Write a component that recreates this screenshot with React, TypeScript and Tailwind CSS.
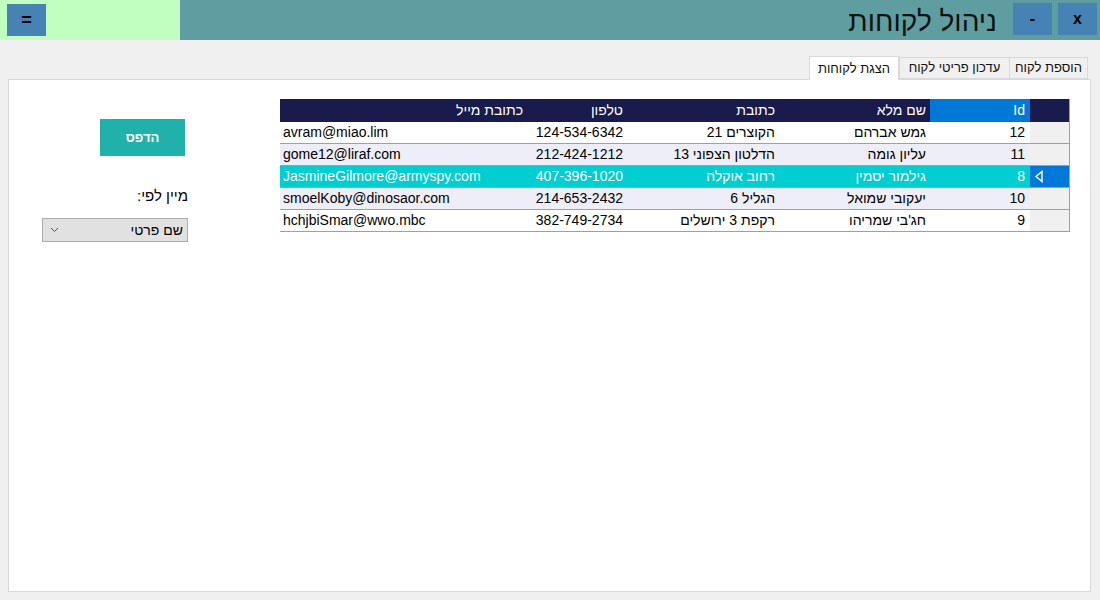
import React from "react";

const rows = [
  { id: "12", name: "גמש אברהם", addr: "הקוצרים 21", phone: "124-534-6342", email: "avram@miao.lim" },
  { id: "11", name: "עליון גומה", addr: "הדלטון הצפוני 13", phone: "212-424-1212", email: "gome12@liraf.com" },
  { id: "8", name: "גילמור יסמין", addr: "רחוב אוקלה", phone: "407-396-1020", email: "JasmineGilmore@armyspy.com", sel: true },
  { id: "10", name: "יעקובי שמואל", addr: "הגליל 6", phone: "214-653-2432", email: "smoelKoby@dinosaor.com" },
  { id: "9", name: "חג'בי שמריהו", addr: "רקפת 3 ירושלים", phone: "382-749-2734", email: "hchjbiSmar@wwo.mbc" },
];

const font = { fontFamily: '"Liberation Sans", "DejaVu Sans", Arial, sans-serif' };

export default function App() {
  return (
    <div className="w-[1100px] h-[600px] bg-[#f0f0f0] overflow-hidden text-black" style={font}>
      {/* top bar */}
      <div className="flex h-10">
        <div className="w-[180px] bg-[#c0ffc0] pl-[7px] pt-1">
          <div className="w-[39px] h-[32px] bg-[#4682b4] flex items-center justify-center font-bold text-[18px] leading-none">=</div>
        </div>
        <div className="flex-1 bg-[#5f9ea0] flex items-start justify-end pt-[3px] pr-[3px]">
          <div dir="rtl" className="text-[28px] leading-none mt-[5px] mr-[16px] text-[#111]">ניהול לקוחות</div>
          <div className="w-[39px] h-[32px] bg-[#4682b4] flex items-center justify-center font-bold text-[16px]">-</div>
          <div className="w-[39px] h-[32px] bg-[#4682b4] flex items-center justify-center font-bold text-[16px] ml-[6px]">x</div>
        </div>
      </div>

      {/* tabs */}
      <div dir="rtl" className="flex items-end h-[39px] pr-[12px] pt-[15px]">
        <div className="h-[22px] w-[79px] border border-[#d9d9d9] bg-[#f0f0f0] flex items-center justify-center text-[13px] text-[#111]">הוספת לקוח</div>
        <div className="h-[22px] w-[110px] border border-r-0 border-[#d9d9d9] bg-[#f0f0f0] flex items-center justify-center text-[13px] text-[#111]">עדכון פריטי לקוח</div>
        <div className="h-[24px] w-[90px] border border-b-0 border-[#d9d9d9] bg-white flex items-center justify-center text-[13px] text-[#111] -mb-px relative z-10">הצגת לקוחות</div>
      </div>

      {/* panel */}
      <div className="ml-[8px] w-[1083px] h-[513px] bg-white border border-[#d9d9d9] flex">
        {/* left controls */}
        <div className="w-[271px] flex flex-col items-start">
          <div className="ml-[91px] mt-[39px] w-[85px] h-[37px] bg-[#20b2aa] text-white font-bold text-[13px] flex items-center justify-center" dir="rtl">הדפס</div>
          <div dir="rtl" className="ml-[33px] w-[146px] mt-[32px] text-[15px] leading-none">מיין לפי:</div>
          <div dir="rtl" className="ml-[33px] mt-[15px] w-[146px] h-[24px] bg-[#e1e1e1] border border-[#adadad] flex items-center justify-between px-[4px] text-[14px]">
            <span>שם פרטי</span>
            <svg width="9" height="6" viewBox="0 0 9 6" className="ml-[3px]"><path d="M1 1 L4.5 4.5 L8 1" stroke="#555" strokeWidth="1" fill="none" /></svg>
          </div>
        </div>

        {/* grid */}
        <div className="mt-[19px] w-[790px] border-r border-[#a0a0a0] self-start" dir="rtl">
          <div className="flex h-[23px] bg-[#181b4b] text-white text-[14px]">
            <div className="w-[39px]" />
            <div className="w-[100px] bg-[#0078d7] flex items-center pr-[5px]">Id</div>
            <div className="w-[151px] flex items-center pr-[4px]">שם מלא</div>
            <div className="w-[152px] flex items-center pr-[4px]">כתובת</div>
            <div className="w-[100px] flex items-center pr-[4px]">טלפון</div>
            <div className="flex-1 flex items-center pr-[4px]">כתובת מייל</div>
          </div>
          {rows.map((r, i) => {
            const bg = r.sel ? "bg-[#00ced1] text-white" : i % 2 === 1 ? "bg-[#eeeef8]" : "bg-white";
            return (
              <div key={r.id} className="flex h-[22px] text-[14px] border-b border-[#a0a0a0]">
                <div className={`w-[39px] flex items-center justify-end ${r.sel ? "bg-[#0078d7]" : "bg-[#f0f0f0]"}`}>
                  {r.sel && (
                    <svg width="10" height="13" viewBox="0 0 10 13" className="ml-[4px]"><path d="M8 1.5 L2 6.5 L8 11.5 Z" fill="#0078d7" stroke="white" strokeWidth="1.4" /></svg>
                  )}
                </div>
                <div className={`flex-1 flex ${bg}`}>
                  <div className="w-[100px] flex items-center pr-[5px]">{r.id}</div>
                  <div className="w-[151px] flex items-center pr-[4px]">{r.name}</div>
                  <div className="w-[152px] flex items-center pr-[4px]">{r.addr}</div>
                  <div className="w-[100px] flex items-center pr-[4px]">{r.phone}</div>
                  <div className="flex-1 flex items-center pl-[3px]" dir="ltr"><span className="w-full text-left">{r.email}</span></div>
                </div>
              </div>
            );
          })}
        </div>
      </div>
    </div>
  );
}
